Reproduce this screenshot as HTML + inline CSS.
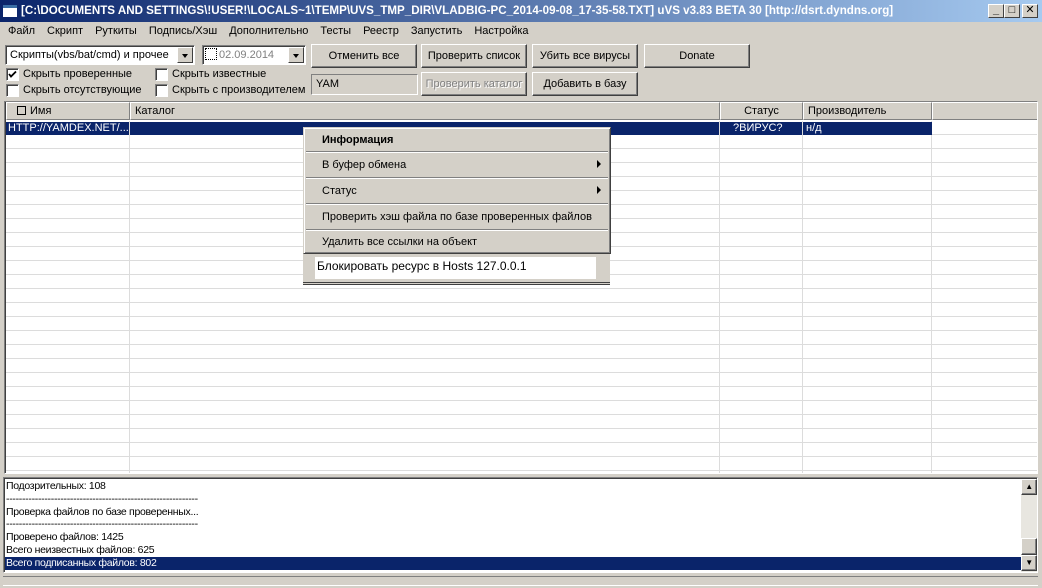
<!DOCTYPE html>
<html><head><meta charset="utf-8"><style>
*{box-sizing:border-box;margin:0;padding:0}
body{width:1042px;height:588px;background:#d4d0c8;font-family:"Liberation Sans","DejaVu Sans",sans-serif;font-size:11px;color:#000;position:relative;overflow:hidden}
.a{position:absolute}
.btn{position:absolute;background:#d4d0c8;border:1px solid;border-color:#fff #404040 #404040 #fff;box-shadow:inset -1px -1px 0 #808080;text-align:center;line-height:22px}
.sunk{position:absolute;background:#fff;border:1px solid;border-color:#808080 #fff #fff #808080;box-shadow:inset 1px 1px 0 #404040}
.cb{position:absolute;width:13px;height:13px;background:#fff;border:1px solid;border-color:#808080 #fff #fff #808080;box-shadow:inset 1px 1px 0 #404040}
.arr{position:absolute;width:16px;background:#d4d0c8;border:1px solid;border-color:#fff #404040 #404040 #fff}
.arr:after{content:"";position:absolute;left:4px;top:6px;border-left:3.5px solid transparent;border-right:3.5px solid transparent;border-top:4px solid #000}
.tb{position:absolute;top:4px;width:16px;height:14px;background:#d4d0c8;border:1px solid;border-color:#fff #404040 #404040 #fff;font-weight:bold;font-size:11px;text-align:center;line-height:11px}
.hd{position:absolute;top:0;height:18px;background:#d4d0c8;border:1px solid;border-color:#fff #808080 #808080 #fff;padding-left:4px;line-height:16px}
.mi{position:absolute;left:18px;height:26px;line-height:24px}
.sep{position:absolute;left:2px;right:2px;height:2px;border-top:1px solid #808080;border-bottom:1px solid #fff}
</style></head><body>
<div class="a" style="left:0;top:0;width:1042px;height:22px;background:linear-gradient(90deg,#0a246a,#a6caf0)"></div>
<div class="a" style="left:3px;top:5px;width:14px;height:12px;background:#fff;border-top:3px solid #3a6ea5"></div>
<div class="a" style="left:21px;top:3px;color:#fff;font-weight:bold;font-size:11.6px;line-height:16px;white-space:nowrap;font-family:'Liberation Sans',sans-serif">[C:\DOCUMENTS AND SETTINGS\!USER!\LOCALS~1\TEMP\UVS_TMP_DIR\VLADBIG-PC_2014-09-08_17-35-58.TXT] uVS v3.83 BETA 30 [http://dsrt.dyndns.org]</div>
<div class="tb" style="left:988px">_</div><div class="tb" style="left:1004px">□</div><div class="tb" style="left:1022px">✕</div>
<div class="a" style="left:8px;top:24px;line-height:14px;white-space:nowrap">
<span style="margin-right:12px">Файл</span><span style="margin-right:12px">Скрипт</span><span style="margin-right:12px">Руткиты</span><span style="margin-right:12px">Подпись/Хэш</span><span style="margin-right:12px">Дополнительно</span><span style="margin-right:12px">Тесты</span><span style="margin-right:12px">Реестр</span><span style="margin-right:12px">Запустить</span><span>Настройка</span></div>
<div class="sunk" style="left:5px;top:45px;width:190px;height:20px;padding:2px 4px;line-height:14px">Скрипты(vbs/bat/cmd) и прочее</div>
<div class="arr" style="left:177px;top:47px;height:16px"></div>
<div class="sunk" style="left:202px;top:45px;width:104px;height:20px;padding:2px 0 0 16px;line-height:14px;color:#808080">02.09.2014</div>
<div class="a" style="left:205px;top:48px;width:12px;height:12px;border:1px dotted #000;background:#fff"></div>
<div class="arr" style="left:288px;top:47px;height:16px"></div>
<div class="btn" style="left:311px;top:44px;width:106px;height:24px">Отменить все</div>
<div class="btn" style="left:421px;top:44px;width:106px;height:24px">Проверить список</div>
<div class="btn" style="left:532px;top:44px;width:106px;height:24px">Убить все вирусы</div>
<div class="btn" style="left:644px;top:44px;width:106px;height:24px">Donate</div>
<div class="cb" style="left:6px;top:68px"></div>
<svg class="a" style="left:8px;top:70px" width="9" height="9"><path d="M1 4 L3 6.5 L8 1.5" stroke="#000" stroke-width="1.8" fill="none"/></svg>
<div class="a" style="left:23px;top:68px">Скрыть проверенные</div>
<div class="cb" style="left:155px;top:68px"></div><div class="a" style="left:172px;top:68px">Скрыть известные</div>
<div class="cb" style="left:6px;top:84px"></div><div class="a" style="left:23px;top:84px">Скрыть отсутствующие</div>
<div class="cb" style="left:155px;top:84px"></div><div class="a" style="left:172px;top:84px">Скрыть с производителем</div>
<div class="a" style="left:311px;top:74px;width:107px;height:21px;border:1px solid;border-color:#808080 #fff #fff #808080;padding:2px 4px;line-height:14px">YAM</div>
<div class="btn" style="left:421px;top:72px;width:106px;height:24px;color:#808080;text-shadow:1px 1px #fff">Проверить каталог</div>
<div class="btn" style="left:532px;top:72px;width:106px;height:24px">Добавить в базу</div>
<div class="a" style="left:4px;top:101px;width:1034px;height:373px;border:1px solid;border-color:#808080 #fff #fff #808080;box-shadow:inset 1px 1px 0 #404040;background:#fff;overflow:hidden">
 <div class="a" style="left:1px;top:19px;width:1032px;height:352px;background:repeating-linear-gradient(180deg,transparent 0,transparent 13px,#dcdcdc 13px,#dcdcdc 14px)"></div>
 <div class="a" style="left:124px;top:19px;width:1px;height:352px;background:#dcdcdc"></div>
 <div class="a" style="left:714px;top:19px;width:1px;height:352px;background:#dcdcdc"></div>
 <div class="a" style="left:797px;top:19px;width:1px;height:352px;background:#dcdcdc"></div>
 <div class="a" style="left:926px;top:19px;width:1px;height:352px;background:#dcdcdc"></div>
 <div class="hd" style="left:1px;width:124px"><span style="display:inline-block;width:9px;height:9px;border:1px solid #000;margin:0 4px 0 6px;vertical-align:-1px"></span>Имя</div>
 <div class="hd" style="left:125px;width:590px">Каталог</div>
 <div class="hd" style="left:715px;width:83px;text-align:center;padding:0">Статус</div>
 <div class="hd" style="left:798px;width:129px">Производитель</div>
 <div class="hd" style="left:927px;width:110px"></div>
 <div class="a" style="left:1px;top:20px;width:926px;height:13px;background:#0a246a;color:#fff;line-height:13px">
  <span class="a" style="left:2px">HTTP://YAMDEX.NET/...</span>
  <span class="a" style="left:123px;top:0;width:1px;height:13px;background:#dcdcdc"></span>
  <span class="a" style="left:713px;top:0;width:1px;height:13px;background:#dcdcdc"></span>
  <span class="a" style="left:727px">?ВИРУС?</span>
  <span class="a" style="left:796px;top:0;width:1px;height:13px;background:#dcdcdc"></span>
  <span class="a" style="left:800px">н/д</span>
 </div>
</div>
<div class="a" style="left:303px;top:127px;width:308px;height:127px;background:#d4d0c8;border:1px solid;border-color:#d4d0c8 #404040 #404040 #d4d0c8;box-shadow:inset 1px 1px 0 #fff,inset -1px -1px 0 #808080">
 <div class="mi" style="top:0;font-weight:bold">Информация</div>
 <div class="sep" style="top:23px"></div>
 <div class="mi" style="top:25px">В буфер обмена</div><div class="a" style="left:293px;top:32px;border-top:4px solid transparent;border-bottom:4px solid transparent;border-left:4px solid #000"></div>
 <div class="sep" style="top:49px"></div>
 <div class="mi" style="top:51px">Статус</div><div class="a" style="left:293px;top:58px;border-top:4px solid transparent;border-bottom:4px solid transparent;border-left:4px solid #000"></div>
 <div class="sep" style="top:75px"></div>
 <div class="mi" style="top:77px">Проверить хэш файла по базе проверенных файлов</div>
 <div class="sep" style="top:101px"></div>
 <div class="mi" style="top:102px">Удалить все ссылки на объект</div>
</div>
<div class="a" style="left:303px;top:254px;width:307px;height:30px;background:#d4d0c8"></div>
<div class="a" style="left:315px;top:257px;width:281px;height:22px;background:#fff;padding-left:2px;line-height:18px;font-size:12px">Блокировать ресурс в Hosts 127.0.0.1</div>
<div class="a" style="left:303px;top:282px;width:307px;height:3px;border-top:1px solid #404040;border-bottom:1px solid #404040"></div>
<div class="a" style="left:3px;top:477px;width:1035px;height:96px;border:1px solid;border-color:#808080 #fff #fff #808080;box-shadow:inset 1px 1px 0 #404040;background:#fff;overflow:hidden;font-size:10.5px;letter-spacing:-0.3px">
 <div class="a" style="left:2px;top:2px;line-height:12.8px">Подозрительных: 108<br>------------------------------------------------------------<br>Проверка файлов по базе проверенных...<br>------------------------------------------------------------<br>Проверено файлов: 1425<br>Всего неизвестных файлов: 625</div>
 <div class="a" style="left:1px;top:79px;width:1016px;height:13px;background:#0a246a;color:#fff;padding-left:1px;line-height:13px">Всего подписанных файлов: 802</div>
 <div class="a" style="left:1017px;top:1px;width:16px;height:93px;background:#e8e6e0"></div>
 <div class="btn" style="left:1017px;top:1px;width:16px;height:16px;line-height:14px;font-size:8px">▲</div>
 <div class="btn" style="left:1017px;top:60px;width:16px;height:17px"></div>
 <div class="btn" style="left:1017px;top:77px;width:16px;height:16px;line-height:14px;font-size:8px">▼</div>
</div>
<div class="a" style="left:3px;top:576px;width:1035px;height:10px;border-top:1px solid #808080;border-bottom:1px solid #fff"></div>
</body></html>
